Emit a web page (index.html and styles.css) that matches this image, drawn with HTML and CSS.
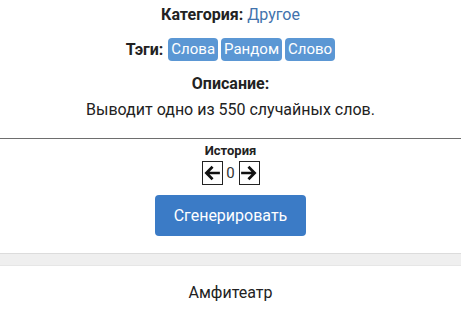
FILE: index.html
```html
<!DOCTYPE html>
<html lang="ru">
<head>
  <meta charset="UTF-8" />
  <meta name="viewport" content="width=device-width, initial-scale=1.0" />
  <title>Генератор слов</title>
  <link rel="stylesheet" href="styles.css">
</head>
<body>
  <div class="info">
    <div class="category"><b>Категория:</b> <a href="#" class="cat-link">Другое</a></div>
    <div class="tags">
      <b>Тэги:</b>
      <span class="tag">Слова</span>
      <span class="tag">Рандом</span>
      <span class="tag">Слово</span>
    </div>
    <div class="desc-title">Описание:</div>
    <div class="desc">Выводит одно из 550 случайных слов.</div>
  </div>

  <hr class="divider">

  <!-- History and generate button -->
  <div class="history">
    <div class="history-title">История</div>
    <div class="history-nav">
      <button class="arrow-btn" id="prevBtn">
        <svg width="18" height="18" viewBox="0 0 16 16"><path d="M15 8H3M8.5 2.5L3 8l5.5 5.5" fill="none" stroke="#111" stroke-width="2.4"/></svg>
      </button>
      <span class="history-count" id="histCount">0</span>
      <button class="arrow-btn" id="nextBtn">
        <svg width="18" height="18" viewBox="0 0 16 16"><path d="M1 8h12M7.5 2.5L13 8l-5.5 5.5" fill="none" stroke="#111" stroke-width="2.4"/></svg>
      </button>
    </div>
    <button class="generate-btn" id="generateBtn">Сгенерировать</button>
  </div>

  <div class="band"></div>

  <div class="result" id="result">Амфитеатр</div>
</body>
</html>
```

FILE: styles.css
```css
html, body {
  margin: 0;
  padding: 0;
}
body {
  font-family: Roboto, "Liberation Sans", sans-serif;
  font-size: 16px;
  color: #222;
  text-align: center;
  background: #fff;
}

.info {
  padding-top: 5px;
}
.category {
  line-height: 20px;
}
.cat-link {
  color: #4273ad;
  text-decoration: none;
}
.tags {
  margin-top: 13px;
  line-height: 23px;
  display: flex;
  justify-content: center;
  align-items: center;
  gap: 3px;
}
.tags b {
  margin-right: 2px;
}
.tag {
  background-color: #5b97d4;
  color: white;
  font-size: 15px;
  padding: 0 3px;
  border-radius: 4px;
}
.desc-title {
  margin-top: 13px;
  font-weight: bold;
  line-height: 20px;
}
.desc {
  margin-top: 6px;
  line-height: 20px;
}

.divider {
  margin: 18px 0 0 0;
  border: none;
  height: 1px;
  background-color: #6e6e6e;
}

.history {
  padding-top: 4px;
}
.history-title {
  font-size: 13px;
  font-weight: bold;
  line-height: 16px;
}
.history-nav {
  margin-top: 2px;
  display: flex;
  justify-content: center;
  align-items: center;
  gap: 3px;
  height: 24px;
}
.arrow-btn {
  width: 21px;
  height: 24px;
  padding: 0;
  border: 1px solid #222;
  background: white;
  display: flex;
  align-items: center;
  justify-content: center;
  cursor: pointer;
}
.history-count {
  width: 10px;
  font-size: 15px;
  color: #333;
}
.generate-btn {
  margin-top: 10px;
  width: 151px;
  height: 41px;
  background-color: #3b7bc6;
  color: white;
  border: none;
  border-radius: 4px;
  font-family: Roboto, "Liberation Sans", sans-serif;
  font-size: 16px;
  cursor: pointer;
}

.band {
  margin-top: 17px;
  height: 11px;
  background-color: #efefef;
  border-top: 1px solid #dcdcdc;
  border-bottom: 1px solid #e6e6e6;
}

.result {
  margin-top: 17px;
  line-height: 20px;
}
```
